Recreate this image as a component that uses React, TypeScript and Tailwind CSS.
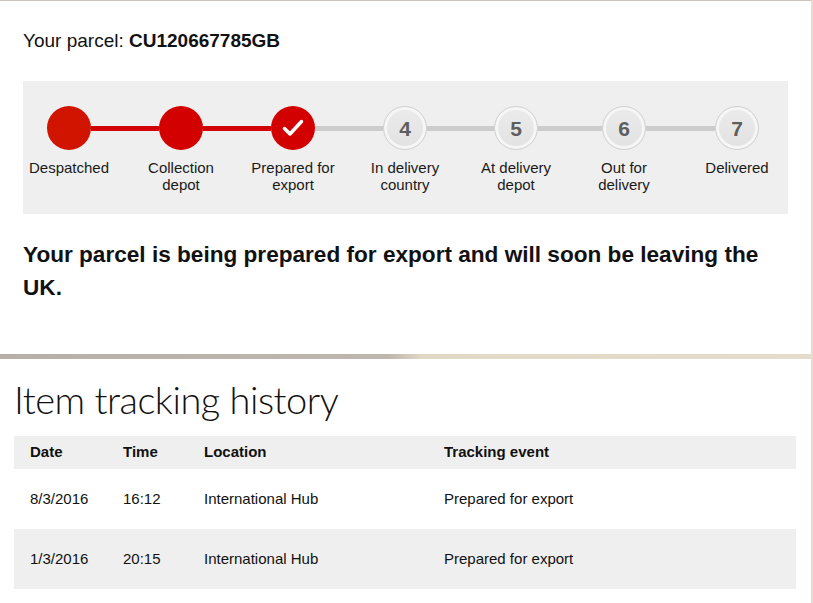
import { Fragment } from 'react';

const steps = [
  { label: ['Despatched'], done: true },
  { label: ['Collection', 'depot'], done: true },
  { label: ['Prepared for', 'export'], done: true, current: true },
  { label: ['In delivery', 'country'], done: false },
  { label: ['At delivery', 'depot'], done: false },
  { label: ['Out for', 'delivery'], done: false },
  { label: ['Delivered'], done: false },
];

const gaps = [68, 68, 68, 67, 64, 69];

const history = [
  { date: '8/3/2016', time: '16:12', location: 'International Hub', event: 'Prepared for export' },
  { date: '1/3/2016', time: '20:15', location: 'International Hub', event: 'Prepared for export' },
];

function StepDot({ n, done, current }: { n: number; done: boolean; current?: boolean }) {
  if (done) {
    return (
      <div className={`w-[44px] h-[44px] rounded-full ${n === 1 ? 'bg-[#d01400]' : 'bg-[#d30000]'}`}>
        {current && (
          <svg width="44" height="44" viewBox="0 0 44 44">
            <path d="M13.5 22.5 L19 28 L30.5 15.5" fill="none" stroke="#fff" strokeWidth="3.5" strokeLinecap="round" strokeLinejoin="round" />
          </svg>
        )}
      </div>
    );
  }
  return (
    <div className="w-[44px] h-[44px] rounded-full border border-[#d2d2d2] bg-[linear-gradient(#ebebeb,#e2e2e2)] shadow-[inset_0_0_0_3px_#f6f6f6] flex items-center justify-center">
      <span className="text-[21px] font-bold text-[#5e5e5e] leading-none">{n}</span>
    </div>
  );
}

export default function App() {
  return (
    <div className="h-screen flex flex-col bg-[#e7ddcc] font-['Liberation_Sans',Arial,sans-serif] text-[#111]">
      {/* Parcel status */}
      <div className="w-[811px] h-[354px] bg-white border-t border-[#cbc4bb] pt-[28px] px-[23px]">
        <p className="text-[19px] leading-[24px]">
          Your parcel: <span className="font-bold">CU120667785GB</span>
        </p>

        <div className="mt-[28px] h-[133px] bg-[#efefef] pt-[25px] pl-[24px] flex items-start">
          {steps.map((s, i) => (
            <Fragment key={i}>
              <div className="w-[44px] flex flex-col items-center">
                <StepDot n={i + 1} done={s.done} current={s.current} />
                <div className="mt-[9px] w-[44px] flex justify-center">
                  <div className="whitespace-nowrap text-center text-[15px] leading-[17px] text-[#1a1a1a]">
                    {s.label.map((l, j) => (
                      <div key={j}>{l}</div>
                    ))}
                  </div>
                </div>
              </div>
              {i < gaps.length && (
                <div
                  className={`h-[5px] mt-[20px] ${steps[i + 1].done ? 'bg-[#d30000]' : 'bg-[#cccccc]'}`}
                  style={{ width: gaps[i] }}
                />
              )}
            </Fragment>
          ))}
        </div>

        <p className="mt-[24px] text-[22.6px] leading-[33px] font-bold w-[760px]">
          Your parcel is being prepared for export and will soon be leaving the UK.
        </p>
      </div>

      <div className="w-[811px] h-[5px] bg-[linear-gradient(to_right,#b8b0a8_0%,#bfb7ae_48%,#e2d8c6_52%,#e6dccb_100%)]" />

      {/* History */}
      <div className="w-[811px] flex-1 bg-white pt-[17px] px-[14px]">
        <h2 className="font-['Lato',sans-serif] font-light text-[38px] leading-[46px] text-[#111] tracking-[-0.5px]">
          Item tracking history
        </h2>

        <div className="mt-[14px] w-[782px] text-[15px]">
          <div className="grid grid-cols-[93px_81px_240px_1fr] pl-[16px] h-[33px] items-center bg-[#efefef] font-bold">
            <div>Date</div>
            <div>Time</div>
            <div>Location</div>
            <div>Tracking event</div>
          </div>
          {history.map((r, i) => (
            <div
              key={i}
              className={`grid grid-cols-[93px_81px_240px_1fr] pl-[16px] h-[60px] items-center ${i % 2 ? 'bg-[#efefef]' : 'bg-white'}`}
            >
              <div>{r.date}</div>
              <div>{r.time}</div>
              <div>{r.location}</div>
              <div>{r.event}</div>
            </div>
          ))}
        </div>
      </div>
    </div>
  );
}
